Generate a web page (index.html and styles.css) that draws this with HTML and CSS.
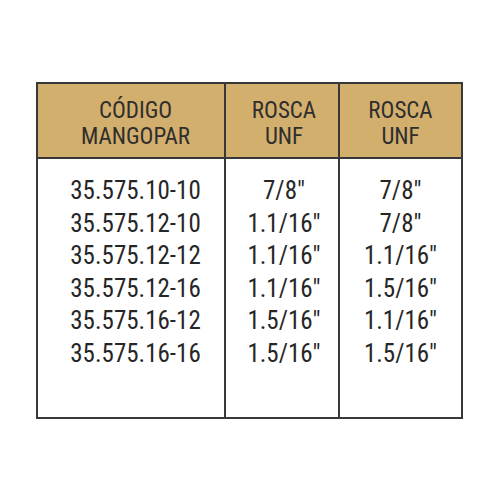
FILE: index.html
```html
<!DOCTYPE html>
<html>
<head>
<meta charset="utf-8">
<link rel="stylesheet" href="styles.css">
</head>
<body>
<div class="sheet">
  <div class="grid">
    <div class="head c1">CÓDIGO<br>MANGOPAR</div>
    <div class="head c2">ROSCA<br>UNF</div>
    <div class="head c3">ROSCA<br>UNF</div>
    <div class="body c1">
      <div>35.575.10-10</div>
      <div>35.575.12-10</div>
      <div>35.575.12-12</div>
      <div>35.575.12-16</div>
      <div>35.575.16-12</div>
      <div>35.575.16-16</div>
    </div>
    <div class="body c2">
      <div>7/8"</div>
      <div>1.1/16"</div>
      <div>1.1/16"</div>
      <div>1.1/16"</div>
      <div>1.5/16"</div>
      <div>1.5/16"</div>
    </div>
    <div class="body c3">
      <div>7/8"</div>
      <div>7/8"</div>
      <div>1.1/16"</div>
      <div>1.5/16"</div>
      <div>1.1/16"</div>
      <div>1.5/16"</div>
    </div>
  </div>
</div>
</body>
</html>
```
FILE: styles.css
```css
html, body {
  margin: 0;
  padding: 0;
  background: #ffffff;
}
.sheet {
  width: 501px;
  height: 501px;
  padding: 82px 0 0 36px;
  box-sizing: border-box;
}
.grid {
  width: 427px;
  height: 337px;
  box-sizing: border-box;
  border: 2px solid #383838;
  display: grid;
  grid-template-columns: 186px 114px 123px;
  grid-template-rows: 75px 1fr;
}
.head {
  background: #d3af6d;
  border-bottom: 2px solid #383838;
  box-sizing: border-box;
  padding-top: 14px;
  text-align: center;
  font-family: "Roboto Condensed", "Liberation Sans", Arial, sans-serif;
  font-weight: 400;
  font-size: 23px;
  line-height: 26px;
  color: #2e2e2e;
}
.body {
  padding-top: 16px;
  text-align: center;
  font-family: "Roboto Condensed", "Liberation Sans", Arial, sans-serif;
  font-weight: 400;
  font-size: 25px;
  line-height: 32.5px;
  color: #262626;
}
.c1 {
  padding-left: 9px;
}
.c2 {
  border-left: 2px solid #383838;
  padding-left: 4px;
}
.c3 {
  border-left: 2px solid #383838;
}
```
